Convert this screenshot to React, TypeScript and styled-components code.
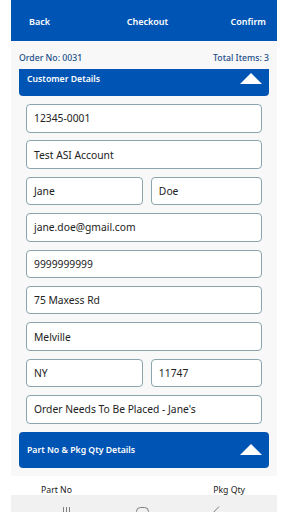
import styled, { createGlobalStyle } from "styled-components";

const GlobalStyle = createGlobalStyle`
  html, body {
    margin: 0;
    padding: 0;
    background: #ffffff;
    font-family: "Noto Sans", "Open Sans", sans-serif;
  }
  * {
    box-sizing: border-box;
  }
`;

const Screen = styled.div`
  width: 288px;
  height: 512px;
  overflow: hidden;
  padding: 0 11px;
  display: flex;
  flex-direction: column;
`;

const TopBar = styled.div`
  height: 41px;
  flex-shrink: 0;
  background-color: #0054b4;
  display: grid;
  grid-template-columns: 1fr auto 1fr;
  align-items: center;
  padding: 0 11px 0 18px;
  color: #fff;
  font-size: 9px;
  font-weight: 600;
`;

const BarButton = styled.span<{ $align: "start" | "center" | "end" }>`
  justify-self: ${(p) => p.$align};
  padding-top: 1px;
`;

const Panel = styled.div`
  background-color: #f8f8f8;
  padding: 0 8px 8px;
`;

const InfoRow = styled.div`
  display: flex;
  justify-content: space-between;
  align-items: center;
  height: 28px;
  padding-top: 5px;
  color: #1c4e88;
  font-size: 8.7px;
  font-weight: 500;
`;

const SectionHeader = styled.div<{ $tall?: boolean }>`
  display: flex;
  justify-content: space-between;
  align-items: ${(p) => (p.$tall ? "center" : "flex-start")};
  height: ${(p) => (p.$tall ? "36px" : "27px")};
  padding: ${(p) => (p.$tall ? "0 7px 0 8px" : "4px 7px 0 8px")};
  background-color: #0054b4;
  border-radius: ${(p) => (p.$tall ? "4px" : "0 0 4px 4px")};
  color: #fff;
  font-size: 8.7px;
  font-weight: 600;
`;

const Triangle = styled.div`
  width: 0;
  height: 0;
  border-left: 11px solid transparent;
  border-right: 11px solid transparent;
  border-bottom: 11px solid #fff;
`;

const Form = styled.div`
  display: flex;
  flex-direction: column;
  gap: 7.9px;
  padding: 8px 7px;
`;

const FieldRow = styled.div`
  display: flex;
  gap: 8px;
`;

const Field = styled.div<{ $grow?: number }>`
  flex: ${(p) => p.$grow ?? 1};
  height: 28.5px;
  display: flex;
  align-items: center;
  padding: 0 7px;
  background: #fff;
  border: 1px solid #8aa5ae;
  border-radius: 4px;
  color: #222;
  font-size: 10.3px;
  white-space: nowrap;
  overflow: hidden;
`;

const TableHead = styled.div`
  display: flex;
  justify-content: space-between;
  padding: 10px 32px 0 30px;
  height: 19px;
  flex-shrink: 0;
  color: #222;
  font-size: 8.7px;
  line-height: 9px;
`;

const NavBar = styled.div`
  flex: 1;
  background-color: #f1f1f1;
  display: flex;
  align-items: flex-start;
  gap: 59.5px;
  padding: 11px 0 0 51px;
`;

const NavIcon = styled.svg`
  width: 14px;
  height: 14px;
  stroke: #808080;
  fill: none;
  stroke-width: 1;
`;

const customer: string[][] = [
  ["12345-0001"],
  ["Test ASI Account"],
  ["Jane", "Doe"],
  ["jane.doe@gmail.com"],
  ["9999999999"],
  ["75 Maxess Rd"],
  ["Melville"],
  ["NY", "11747"],
  ["Order Needs To Be Placed - Jane's"],
];

export default function App() {
  return (
    <>
      <GlobalStyle />
      <Screen>
        <TopBar>
          <BarButton $align="start">Back</BarButton>
          <BarButton $align="center">Checkout</BarButton>
          <BarButton $align="end">Confirm</BarButton>
        </TopBar>
        <Panel>
          <InfoRow>
            <span>Order No: 0031</span>
            <span>Total Items: 3</span>
          </InfoRow>
          <SectionHeader>
            <span>Customer Details</span>
            <Triangle />
          </SectionHeader>
          <Form>
            {customer.map((row, i) => (
              <FieldRow key={i}>
                {row.map((v, j) => (
                  <Field key={j} $grow={row.length > 1 && j === 0 ? 1.06 : 1}>
                    {v}
                  </Field>
                ))}
              </FieldRow>
            ))}
          </Form>
          <SectionHeader $tall>
            <span>Part No &amp; Pkg Qty Details</span>
            <Triangle />
          </SectionHeader>
        </Panel>
        <TableHead>
          <span>Part No</span>
          <span>Pkg Qty</span>
        </TableHead>
        <NavBar>
          <NavIcon viewBox="0 0 14 14">
            <path d="M1.5 1v13M4.5 1v13M7.5 1v13" />
          </NavIcon>
          <NavIcon viewBox="0 0 14 14">
            <rect x="0.5" y="1.5" width="12" height="14" rx="4" />
          </NavIcon>
          <NavIcon viewBox="0 0 14 14">
            <path d="M10 0.5L3 8l7 7" />
          </NavIcon>
        </NavBar>
      </Screen>
    </>
  );
}
